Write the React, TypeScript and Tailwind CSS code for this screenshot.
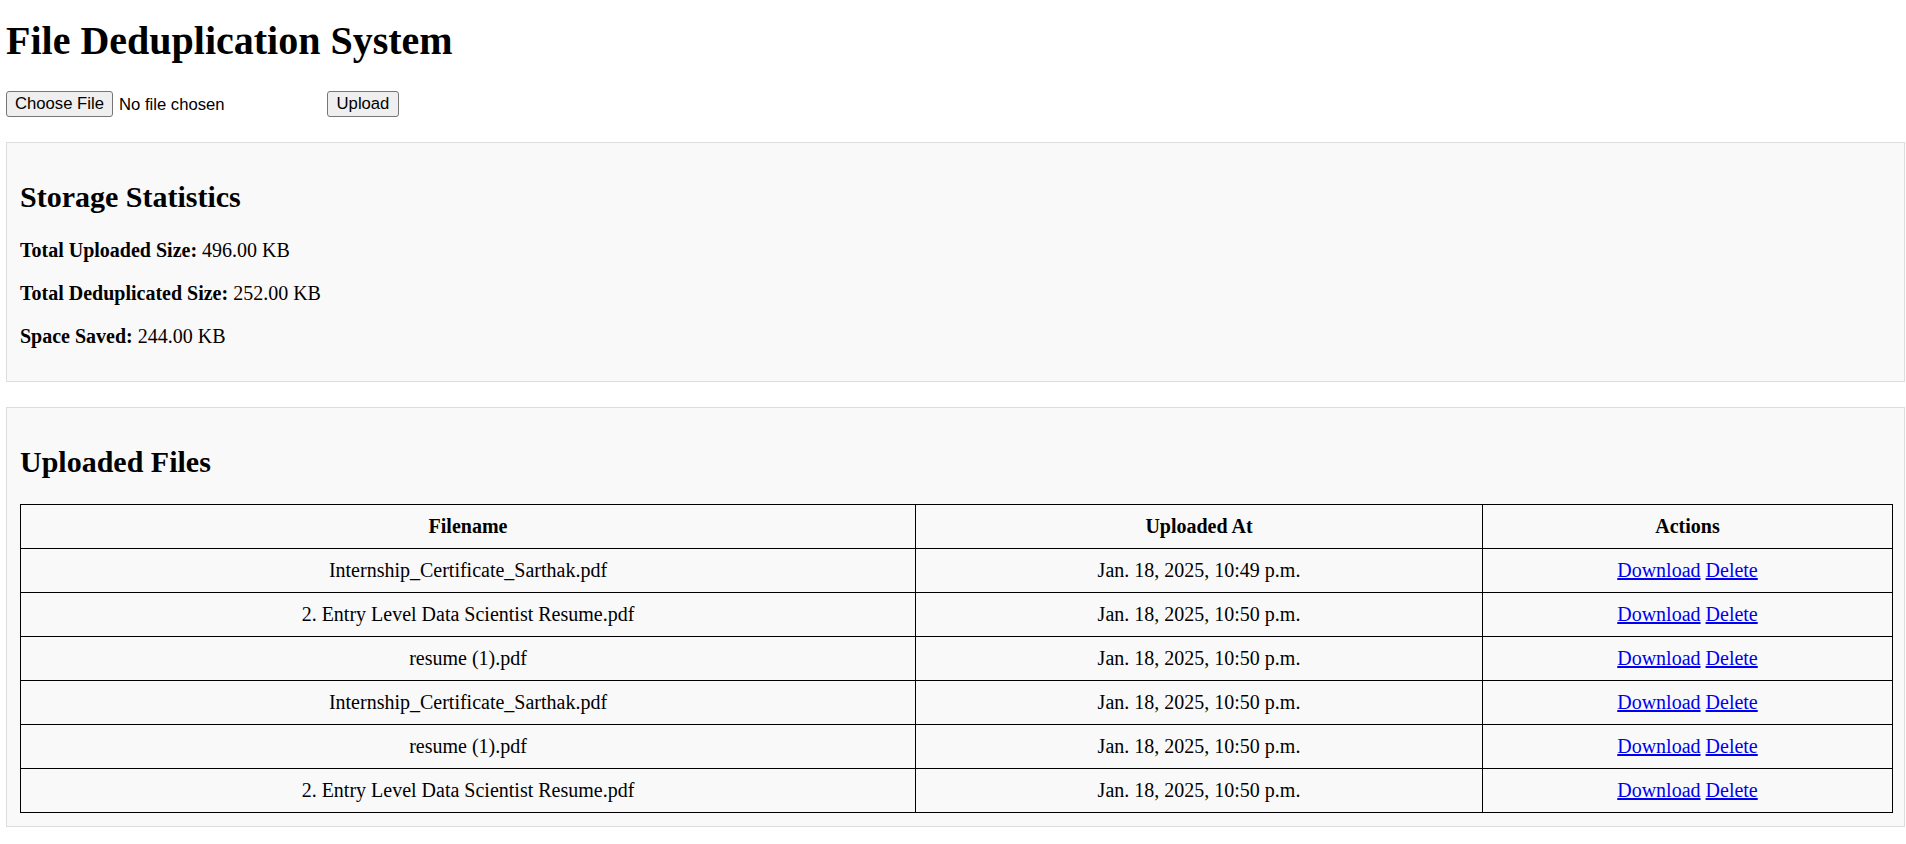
import React from 'react';

type FileRow = {
  name: string;
  uploadedAt: string;
};

const files: FileRow[] = [
  { name: 'Internship_Certificate_Sarthak.pdf', uploadedAt: 'Jan. 18, 2025, 10:49 p.m.' },
  { name: '2. Entry Level Data Scientist Resume.pdf', uploadedAt: 'Jan. 18, 2025, 10:50 p.m.' },
  { name: 'resume (1).pdf', uploadedAt: 'Jan. 18, 2025, 10:50 p.m.' },
  { name: 'Internship_Certificate_Sarthak.pdf', uploadedAt: 'Jan. 18, 2025, 10:50 p.m.' },
  { name: 'resume (1).pdf', uploadedAt: 'Jan. 18, 2025, 10:50 p.m.' },
  { name: '2. Entry Level Data Scientist Resume.pdf', uploadedAt: 'Jan. 18, 2025, 10:50 p.m.' },
];

export default function App() {
  return (
    <div className="min-h-screen bg-white text-black text-[20px] font-['Liberation_Serif','Times_New_Roman',serif] pl-[6px] pt-[18px] pb-[20px]">
      <h1 className="m-0 text-[40px] leading-[46px] font-bold">File Deduplication System</h1>

      {/* upload form */}
      <div className="mt-[27px] flex items-center h-[26px] font-['Liberation_Sans',Arial,sans-serif] text-[16.67px]">
        <div className="w-[317px] flex items-center">
          <button className="w-[107px] h-[26px] bg-[#efefef] border border-[#767676] rounded-[3px] text-black leading-none">
            Choose File
          </button>
          <span className="ml-[6px]">No file chosen</span>
        </div>
        <button className="ml-[4px] w-[72px] h-[26px] bg-[#efefef] border border-[#767676] rounded-[3px] text-black leading-none">
          Upload
        </button>
      </div>

      {/* storage stats */}
      <div className="mt-[25px] w-[1899px] bg-[#f9f9f9] border border-[#dddddd] pl-[13px] pr-[11px] pt-[12px] pb-[13px]">
        <h2 className="mt-[25px] mb-[25px] text-[30px] leading-[34px] font-bold">Storage Statistics</h2>
        <p className="leading-[23px] mb-[20px]">
          <strong>Total Uploaded Size:</strong> 496.00 KB
        </p>
        <p className="leading-[23px] mb-[20px]">
          <strong>Total Deduplicated Size:</strong> 252.00 KB
        </p>
        <p className="leading-[23px] mb-[20px]">
          <strong>Space Saved:</strong> 244.00 KB
        </p>
      </div>

      {/* file list */}
      <div className="mt-[25px] w-[1899px] bg-[#f9f9f9] border border-[#dddddd] pl-[13px] pr-[11px] pt-[12px] pb-[13px]">
        <h2 className="mt-[25px] mb-[25px] text-[30px] leading-[34px] font-bold">Uploaded Files</h2>
        <table className="w-full table-fixed border-collapse border border-black">
          <thead>
            <tr>
              <th className="w-[895px] border border-black py-[10px] leading-[23px] font-bold text-center">Filename</th>
              <th className="w-[567px] border border-black py-[10px] leading-[23px] font-bold text-center">Uploaded At</th>
              <th className="border border-black py-[10px] leading-[23px] font-bold text-center">Actions</th>
            </tr>
          </thead>
          <tbody>
            {files.map((f, i) => (
              <tr key={i}>
                <td className="border border-black py-[10px] leading-[23px] text-center">{f.name}</td>
                <td className="border border-black py-[10px] leading-[23px] text-center">{f.uploadedAt}</td>
                <td className="border border-black py-[10px] leading-[23px] text-center">
                  <a href="#" className="text-[#0000ee] underline">Download</a>{' '}
                  <a href="#" className="text-[#0000ee] underline">Delete</a>
                </td>
              </tr>
            ))}
          </tbody>
        </table>
      </div>
    </div>
  );
}
